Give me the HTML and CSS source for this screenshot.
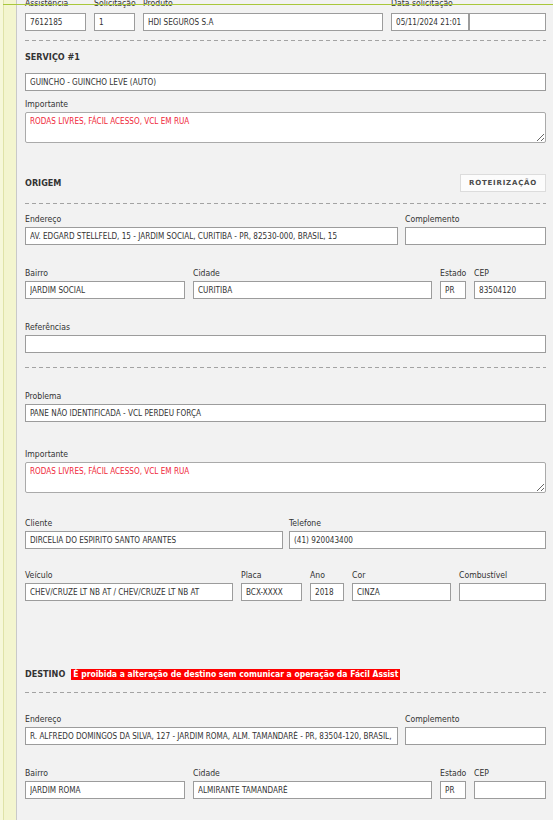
FILE: index.html
```html
<!DOCTYPE html>
<html lang="pt-BR">
<head>
<meta charset="utf-8">
<title>Serviço</title>
<link rel="stylesheet" href="styles.css">
</head>
<body>
<div class="frame-line"></div>
<div class="page">
  <aside class="strip"></aside>
  <main class="main">
    <div class="row r-top">
      <div class="field w61"><label>Assistência</label><input value="7612185" readonly></div>
      <div class="field w41"><label>Solicitação</label><input value="1" readonly></div>
      <div class="field w240"><label>Produto</label><input value="HDI SEGUROS S.A" readonly></div>
      <div class="field w155">
        <label>Data solicitação</label>
        <div class="pair"><input class="w78" value="05/11/2024 21:01" readonly><input class="w77" value="" readonly></div>
      </div>
    </div>

    <div class="sep sep-a"></div>

    <div class="sec-head sh-serv"><span class="sec-title">SERVIÇO #1</span></div>
    <input class="full" value="GUINCHO - GUINCHO LEVE (AUTO)" readonly>

    <div class="field mt7">
      <label>Importante</label>
      <textarea class="red" readonly>RODAS LIVRES, FÁCIL ACESSO, VCL EM RUA</textarea>
    </div>

    <div class="sec-head sh-orig">
      <span class="sec-title">ORIGEM</span>
      <button class="btn">ROTEIRIZAÇÃO</button>
    </div>

    <div class="sep sep-b"></div>

    <div class="row r-end mt9">
      <div class="field"><label>Endereço</label><input value="AV. EDGARD STELLFELD, 15 - JARDIM SOCIAL, CURITIBA - PR, 82530-000, BRASIL, 15" readonly></div>
      <div class="field"><label>Complemento</label><input value="" readonly></div>
    </div>

    <div class="row r-bai mt22">
      <div class="field"><label>Bairro</label><input value="JARDIM SOCIAL" readonly></div>
      <div class="field"><label>Cidade</label><input value="CURITIBA" readonly></div>
      <div class="field"><label>Estado</label><input value="PR" readonly></div>
      <div class="field"><label>CEP</label><input value="83504120" readonly></div>
    </div>

    <div class="field mt22">
      <label>Referências</label>
      <input class="full" value="" readonly>
    </div>

    <div class="sep sep-c"></div>

    <div class="field mt22">
      <label>Problema</label>
      <input class="full" value="PANE NÃO IDENTIFICADA - VCL PERDEU FORÇA" readonly>
    </div>

    <div class="field mt26">
      <label>Importante</label>
      <textarea class="red" readonly>RODAS LIVRES, FÁCIL ACESSO, VCL EM RUA</textarea>
    </div>

    <div class="row r-cli mt24">
      <div class="field"><label>Cliente</label><input value="DIRCELIA DO ESPIRITO SANTO ARANTES" readonly></div>
      <div class="field"><label>Telefone</label><input value="(41) 920043400" readonly></div>
    </div>

    <div class="row r-vei mt20">
      <div class="field"><label>Veículo</label><input value="CHEV/CRUZE LT NB AT / CHEV/CRUZE LT NB AT" readonly></div>
      <div class="field"><label>Placa</label><input value="BCX-XXXX" readonly></div>
      <div class="field"><label>Ano</label><input value="2018" readonly></div>
      <div class="field"><label>Cor</label><input value="CINZA" readonly></div>
      <div class="field"><label>Combustível</label><input value="" readonly></div>
    </div>

    <div class="sec-head sh-dest">
      <span class="sec-title">DESTINO</span>
      <span class="warn">É proibida a alteração de destino sem comunicar a operação da Fácil Assist</span>
    </div>

    <div class="sep sep-d"></div>

    <div class="row r-end mt20">
      <div class="field"><label>Endereço</label><input value="R. ALFREDO DOMINGOS DA SILVA, 127 - JARDIM ROMA, ALM. TAMANDARÉ - PR, 83504-120, BRASIL, 127" readonly></div>
      <div class="field"><label>Complemento</label><input value="" readonly></div>
    </div>

    <div class="row r-bai mt22">
      <div class="field"><label>Bairro</label><input value="JARDIM ROMA" readonly></div>
      <div class="field"><label>Cidade</label><input value="ALMIRANTE TAMANDARÉ" readonly></div>
      <div class="field"><label>Estado</label><input value="PR" readonly></div>
      <div class="field"><label>CEP</label><input value="" readonly></div>
    </div>
  </main>
</div>
</body>
</html>
```
FILE: styles.css
```css
html, body {
  margin: 0;
  padding: 0;
  height: 820px;
  overflow: hidden;
  background: #f2f2f2;
  font-family: "DejaVu Sans Condensed", "DejaVu Sans", sans-serif;
  color: #333;
}

.frame-line {
  position: absolute;
  top: 4px;
  left: 3px;
  right: 0;
  height: 1px;
  background: #a9c73c;
}

.page {
  display: flex;
  min-height: 820px;
}

.strip {
  width: 16px;
  flex: 0 0 16px;
  background: linear-gradient(to right, #f6f8da 0 3px, #dfe3a8 3px 4px, #f3f5cf 4px);
  border-right: 1px solid #c9c9c9;
}

.main {
  flex: 1;
  background: #f2f2f2;
  padding: 0 7px 0 8px;
  margin-top: -1px;
}

label {
  display: block;
  font-size: 8.6px;
  line-height: 12px;
  height: 12px;
  margin-bottom: 2px;
  color: #333;
  white-space: nowrap;
}

.r-top label {
  line-height: 8px;
}

input, textarea {
  box-sizing: border-box;
  display: block;
  width: 100%;
  height: 18px;
  margin: 0;
  padding: 0 4px;
  border: 1px solid #9c9c9c;
  border-radius: 0;
  background: #fff;
  font-family: "DejaVu Sans Condensed", "DejaVu Sans", sans-serif;
  font-size: 8.1px;
  line-height: 16px;
  color: #333;
  outline: none;
}

textarea {
  height: 31px;
  padding: 3px 4px;
  line-height: 10px;
  border-color: #aaa;
  border-radius: 2px;
  overflow: hidden;
}

textarea.red {
  color: #f0283a;
}

.full { width: 100%; }

.row { display: flex; }
.r-top { gap: 8px; }
.w61 { width: 61px; }
.w41 { width: 41px; }
.w240 { width: 240px; }
.w155 { width: 155px; }
.pair { display: flex; }
.pair .w78 { width: 78px; }
.pair .w77 { width: 77px; }

.r-end { display: grid; grid-template-columns: 373px 141px; column-gap: 7px; }
.r-bai { display: grid; grid-template-columns: 160px 239px 26px 72px; column-gap: 8px; }
.r-cli { display: grid; grid-template-columns: 258px 257px; column-gap: 6px; }
.r-vei { display: grid; grid-template-columns: 208px 61px 34px 99px 87px; column-gap: 8px; }

.sep {
  height: 1px;
  background: repeating-linear-gradient(to right, #a3a3a3 0 4px, transparent 4px 7px);
}
.sep-a { margin-top: 9px; }
.sep-b { margin-top: 11px; }
.sep-c { margin-top: 14px; }
.sep-d { margin-top: 9px; }

.sec-head {
  display: flex;
  align-items: center;
  height: 18px;
}
.sh-serv { margin: 7px 0 7px; }
.sh-orig { margin-top: 31px; justify-content: space-between; }
.sh-dest { margin-top: 64px; gap: 6px; }

.sec-title {
  font-weight: bold;
  font-size: 9px;
  color: #333;
}

.btn {
  box-sizing: border-box;
  width: 86px;
  height: 18px;
  padding: 0;
  border: 1px solid #dcdcdc;
  background: #fcfcfc;
  font-family: "DejaVu Sans", sans-serif;
  font-weight: bold;
  font-size: 7px;
  letter-spacing: 0.8px;
  color: #4a4a4a;
}

.warn {
  background: #ff0000;
  color: #fff;
  font-weight: bold;
  font-size: 8.5px;
  line-height: 11px;
  padding: 0 2px;
  white-space: nowrap;
}

.mt7 { margin-top: 7px; }
.mt9 { margin-top: 9px; }
.mt20 { margin-top: 20px; }
.mt22 { margin-top: 22px; }
.mt24 { margin-top: 24px; }
.mt26 { margin-top: 26px; }
```
